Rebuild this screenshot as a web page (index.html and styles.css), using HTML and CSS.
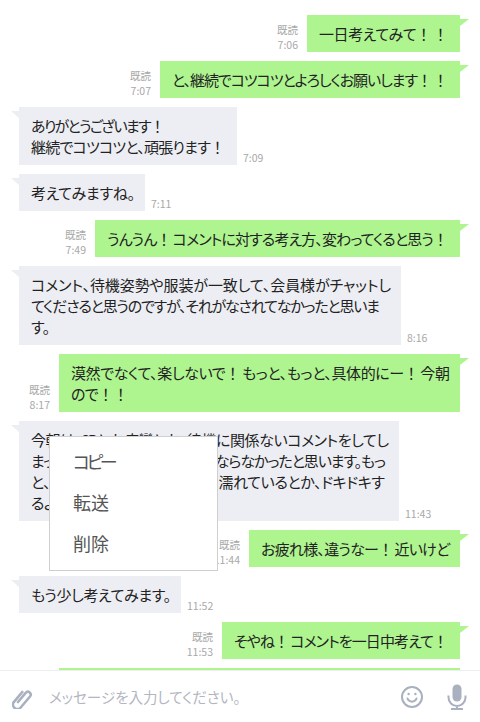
FILE: index.html
```html
<!DOCTYPE html>
<html lang="ja">
<head>
<meta charset="utf-8">
<title>トーク</title>
<link rel="stylesheet" href="styles.css">
</head>
<body>
<div class="app">
  <main class="chat">
    <div class="row out"><div class="meta"><span>既読</span><span>7:06</span></div><div class="bubble w153"><span class="ln">一日考えてみて<b>！</b><b>！</b></span></div></div>
    <div class="row out"><div class="meta"><span>既読</span><span>7:07</span></div><div class="bubble w300"><span class="ln">と、継続でコツコツとよろしくお願いします<b>！</b><b>！</b></span></div></div>
    <div class="row in"><div class="bubble w218"><span class="ln l134">ありがとうございます<b>！</b></span><span class="ln">継続でコツコツと、頑張ります<b>！</b></span></div><div class="meta"><span>7:09</span></div></div>
    <div class="row in"><div class="bubble w126"><span class="ln">考えてみますね。</span></div><div class="meta"><span>7:11</span></div></div>
    <div class="row out"><div class="meta"><span>既読</span><span>7:49</span></div><div class="bubble w365"><span class="ln">うんうん<b>！</b>コメントに対する考え方、変わってくると思う<b>！</b></span></div></div>
    <div class="row in"><div class="bubble w382"><span class="ln">コメント、待機姿勢や服装が一致して、会員様がチャットし</span><span class="ln l347">てくださると思うのですが、それがなされてなかったと思いま</span><span class="ln free">す。</span></div><div class="meta"><span>8:16</span></div></div>
    <div class="row out"><div class="meta"><span>既読</span><span>8:17</span></div><div class="bubble w401"><span class="ln">漠然でなくて、楽しないで<b>！</b>もっと、もっと、具体的にー<b>！</b>今朝</span><span class="ln free">ので<b>！</b><b>！</b></span></div></div>
    <div class="row in"><div class="bubble w380"><span class="ln">今朝は、3Pとか痙攣とか、待機に関係ないコメントをしてし</span><span class="ln l351">まったので、全然話が全く面白くならなかったと思います。もっ</span><span class="ln l350">と、どこがどう濡れているとか、濡れているとか、ドキドキす</span><span class="ln free">るようなコメントを。</span></div><div class="meta"><span>11:43</span></div></div>
    <div class="row out"><div class="meta"><span>既読</span><span>11:44</span></div><div class="bubble w211"><span class="ln">お疲れ様、違うなー<b>！</b>近いけど</span></div></div>
    <div class="row in"><div class="bubble w162"><span class="ln">もう少し考えてみます。</span></div><div class="meta"><span>11:52</span></div></div>
    <div class="row out"><div class="meta"><span>既読</span><span>11:53</span></div><div class="bubble w238"><span class="ln">そやね<b>！</b>コメントを一日中考えて<b>！</b></span></div></div>
    <div class="row out"><div class="bubble w401"><span class="ln">漠然でなくて、楽しないで<b>！</b>もっと、もっと、具体的にー<b>！</b>今朝</span></div></div>
  </main>
  <ul class="menu">
    <li class="kana">コピー</li>
    <li>転送</li>
    <li>削除</li>
  </ul>
  <footer class="inputbar">
    <svg class="icon clip" viewBox="2.5 -1.5 24 24" fill="none" stroke="#a9b0bf" stroke-width="2.6" stroke-linecap="round"><path d="M8.5 15.5 16.2 6.4a2.8 2.8 0 0 1 4.3 3.6l-9.3 11a4.4 4.4 0 0 1-6.7-5.7l8.3-9.8"/></svg>
    <span class="placeholder">メッセージを入力してください。</span>
    <svg class="icon smile" viewBox="0 0 24 24" fill="none" stroke="#a9b0bf" stroke-width="2"><circle cx="12" cy="12" r="10"/><path d="M7.5 13.5a4.8 4.8 0 0 0 9 0" stroke-linecap="round"/><circle cx="8.6" cy="9" r="1.2" fill="#a9b0bf" stroke="none"/><circle cx="15.4" cy="9" r="1.2" fill="#a9b0bf" stroke="none"/></svg>
    <svg class="icon mic" viewBox="0 0 20 26" fill="none" stroke="#a9b0bf" stroke-width="2"><rect x="5.5" y="0.5" width="9" height="17" rx="4.5" fill="#a9b0bf" stroke="none"/><path d="M1.5 11.5v2a8.5 8.5 0 0 0 17 0v-2M10 22v3M4 25h12"/></svg>
  </footer>
</div>
</body>
</html>
```
FILE: styles.css
```css
* { box-sizing: border-box; }
html, body { margin: 0; padding: 0; background: #fff; }
body { font-family: "Noto Sans CJK JP", "Noto Sans", sans-serif; }
.app { position: relative; width: 480px; height: 722px; overflow: hidden; display: flex; flex-direction: column; }
.chat { height: 670px; flex: none; overflow: hidden; padding: 15px 20px 0 19px; display: flex; flex-direction: column; gap: 9px; }
.row { display: flex; align-items: flex-end; flex: none; }
.row.out { justify-content: flex-end; }
.bubble { position: relative; flex: none; padding: 8px 12px; font-size: 15px; line-height: 21px; color: #222; font-feature-settings: "palt"; letter-spacing: -2px; }
.bubble b { font-weight: 400; font-feature-settings: normal; letter-spacing: 0; }
.ln { display: block; text-align: justify; text-align-last: justify; text-justify: inter-character; }
.ln.free { text-align: left; text-align-last: left; letter-spacing: -0.6px; }
.l134 { width: 134px; }
.l347 { width: 347px; }
.l351 { width: 351px; letter-spacing: -4px; }
.l350 { width: 350px; letter-spacing: -4px; }
.w126 { width: 126px; }
.w153 { width: 153px; }
.w162 { width: 162px; }
.w211 { width: 211px; }
.w218 { width: 218px; }
.w238 { width: 238px; }
.w300 { width: 300px; }
.w365 { width: 365px; }
.w380 { width: 380px; }
.w382 { width: 382px; }
.w401 { width: 401px; }
.out .bubble { background: #aef48f; }
.in .bubble { background: #edeef3; }
.out .bubble::after, .in .bubble::after { content: ""; position: absolute; top: 4px; width: 0; height: 0; border-top: 7px solid transparent; }
.out .bubble::after { left: 100%; border-top-color: #aef48f; border-right: 9px solid transparent; }
.in .bubble::after { right: 100%; border-top-color: #edeef3; border-left: 8px solid transparent; }
.meta { display: flex; flex-direction: column; font-size: 10.5px; line-height: 15px; color: #a8a8a8; }
.out .meta { align-items: flex-end; margin-right: 9px; }
.in .meta { margin-left: 6px; }
.menu { position: absolute; left: 49px; top: 436px; width: 169px; height: 135px; margin: 0; padding: 4px 0; list-style: none; background: #fff; border: 1px solid #cfcfd2; }
.menu li { height: 41px; padding-left: 23px; font-size: 18px; line-height: 41px; color: #555; overflow: hidden; }
.menu .kana { font-feature-settings: "palt"; letter-spacing: -3.5px; }
.inputbar { flex: none; height: 52px; border-top: 1px solid #eceef0; background: #fff; display: flex; align-items: center; padding: 0 12px; }
.icon { flex: none; display: block; }
.clip { width: 24px; height: 24px; margin-right: 13px; }
.placeholder { flex: 1; font-size: 14.5px; color: #b3b6bf; font-feature-settings: "palt"; }
.smile { width: 24px; height: 24px; margin-right: 23px; }
.mic { width: 20px; height: 26px; margin-right: 1px; }
```
